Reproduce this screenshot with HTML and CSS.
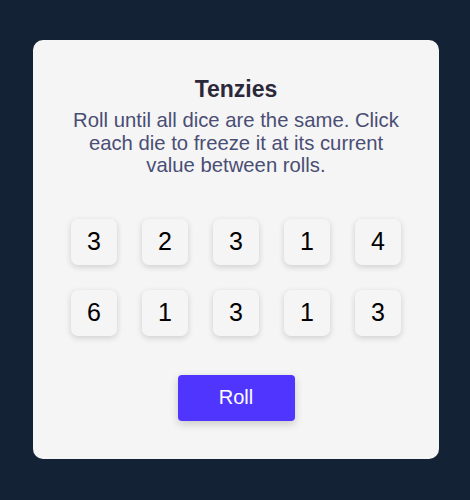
FILE: index.html
```html
<!DOCTYPE html>
<html lang="en">
<head>
<meta charset="utf-8">
<title>Tenzies</title>
<link rel="stylesheet" href="styles.css">
</head>
<body>
<main class="card">
  <h1 class="title">Tenzies</h1>
  <p class="instructions">Roll until all dice are the same. Click each die to freeze it at its current value between rolls.</p>
  <div class="dice">
    <button class="die">3</button>
    <button class="die">2</button>
    <button class="die">3</button>
    <button class="die">1</button>
    <button class="die">4</button>
    <button class="die">6</button>
    <button class="die">1</button>
    <button class="die">3</button>
    <button class="die">1</button>
    <button class="die">3</button>
  </div>
  <button class="roll">Roll</button>
</main>
</body>
</html>
```

FILE: styles.css
```css
* { box-sizing: border-box; }
html, body { margin: 0; padding: 0; }
body {
  background: #132235;
  font-family: "Liberation Sans", Arial, sans-serif;
  padding: 40px 31px 41px 33px;
}
.card {
  width: 406px;
  height: 419px;
  background: #f5f5f5;
  border-radius: 10px;
  display: flex;
  flex-direction: column;
  align-items: center;
  padding: 36px 20px 0;
}
.title {
  margin: 0;
  font-size: 23px;
  line-height: 26px;
  font-weight: 700;
  color: #2b283a;
}
.instructions {
  margin: 7px 0 0;
  max-width: 340px;
  font-size: 20.3px;
  line-height: 22.5px;
  color: #4a4e74;
  text-align: center;
}
.dice {
  display: grid;
  grid-template-columns: repeat(5, 46px);
  gap: 25px;
  margin-top: 42px;
}
.die {
  width: 46px;
  height: 46px;
  border: none;
  border-radius: 7px;
  background: #f5f5f5;
  box-shadow: 0 2px 6px rgba(0, 0, 0, 0.16);
  font-family: "Liberation Sans", Arial, sans-serif;
  font-size: 25px;
  color: #000;
  padding: 0;
}
.roll {
  margin-top: 39px;
  width: 117px;
  height: 46px;
  border: none;
  border-radius: 4px;
  background: #5035ff;
  color: #fff;
  font-family: "Liberation Sans", Arial, sans-serif;
  font-size: 20px;
  box-shadow: 0 3px 8px rgba(0, 0, 0, 0.18);
}
```
